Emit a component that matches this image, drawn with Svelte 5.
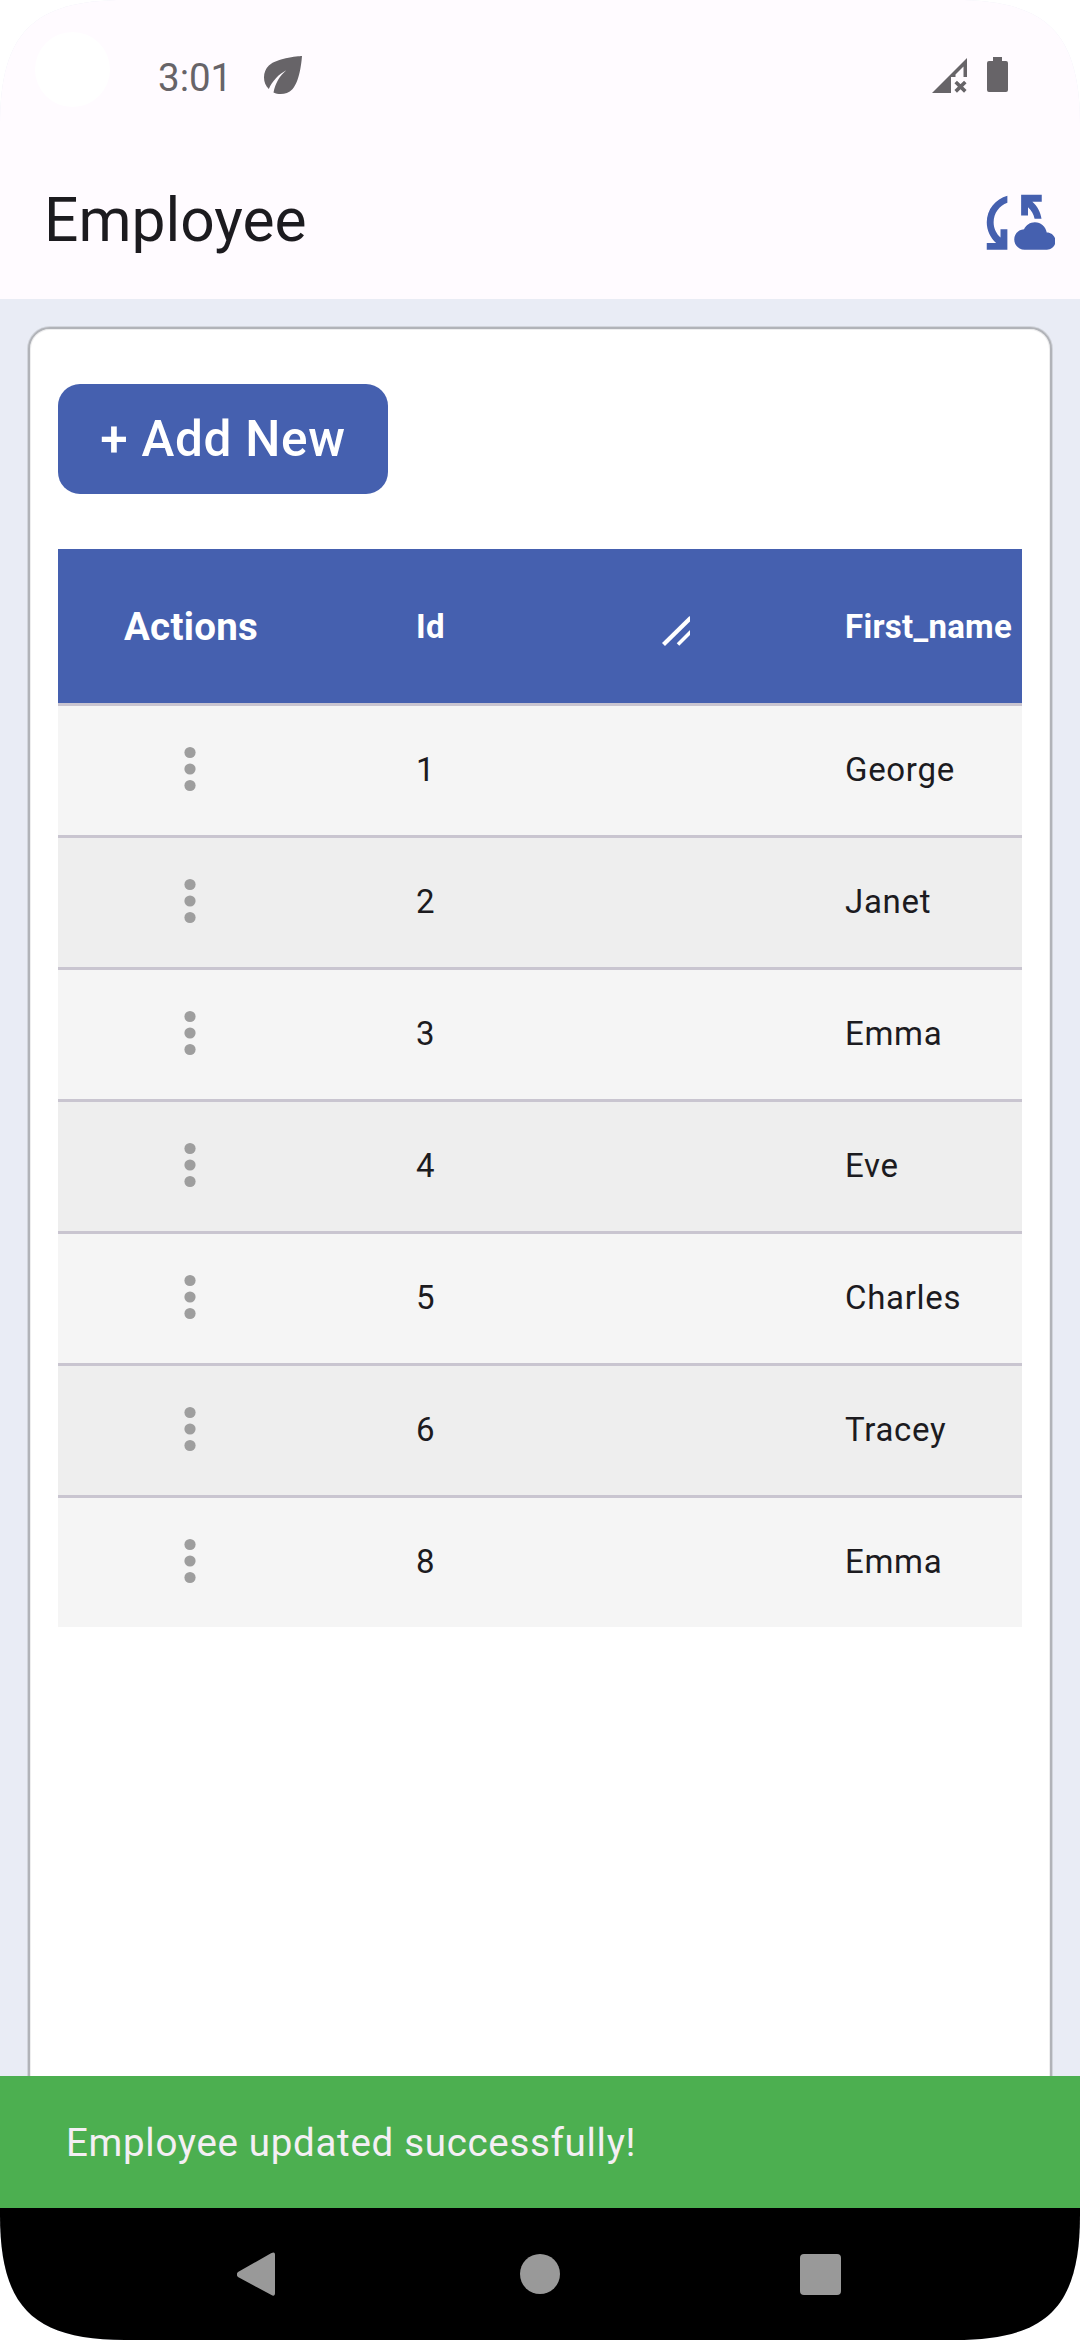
<script>
  const employees = [
    { id: 1, name: 'George' },
    { id: 2, name: 'Janet' },
    { id: 3, name: 'Emma' },
    { id: 4, name: 'Eve' },
    { id: 5, name: 'Charles' },
    { id: 6, name: 'Tracey' },
    { id: 8, name: 'Emma' }
  ];
</script>

<div class="screen">
  <header class="top">
    <div class="status">
      <span class="camera"></span>
      <span class="time">3:01</span>
      <svg class="leaf" viewBox="4 4 16 16"><path d="M6.05 8.05c-2.73 2.73-2.73 7.15-.02 9.88 1.47-3.4 4.09-6.24 7.36-7.93-2.77 2.34-4.71 5.61-5.39 9.32 2.6 1.23 5.8.78 7.95-1.37C19.43 14.47 20 4 20 4S9.53 4.57 6.05 8.05z" /></svg>
      <svg class="signal" viewBox="0 0 35 35">
        <path d="M0 35L35 0V19H31.5V8.5L23.5 16.5V19H19V35Z" />
        <path class="cross" d="M23.7 24L33.3 33.4M33.3 24L23.7 33.4" />
      </svg>
      <svg class="battery" viewBox="0 0 21 35"><path d="M6 0h9v4h4a2 2 0 0 1 2 2v27a2 2 0 0 1-2 2H2a2 2 0 0 1-2-2V6a2 2 0 0 1 2-2h4z" /></svg>
    </div>
    <div class="appbar">
      <h1>Employee</h1>
      <svg class="sync" viewBox="0 0 24 24"><path d="M21.5 14.98c-.02 0-.03 0-.05.01C21.2 13.3 19.76 12 18 12c-1.4 0-2.6.83-3.16 2.02C13.26 14.1 12 15.4 12 17c0 1.66 1.34 3 3 3l6.5-.02c1.38 0 2.5-1.12 2.5-2.5s-1.12-2.5-2.5-2.5zM10 4.26v2.09C7.67 7.18 6 9.39 6 12c0 1.77.78 3.34 2 4.44V14h2v6H4v-2h2.73C5.06 16.54 4 14.4 4 12c0-3.73 2.55-6.85 6-7.74zM14 10V4h6v2h-2.73c1.43 1.26 2.41 3.01 2.66 5h-2.02c-.23-1.36-.93-2.55-1.91-3.39V10z" /></svg>
    </div>
  </header>

  <main>
    <section class="card">
      <button>+ Add New</button>
      <div class="table">
        <div class="row head">
          <span class="actions">Actions</span>
          <span class="id">Id
            <svg class="resize" viewBox="0 0 30 32"><path d="M3.500 29.500L31 2.500" /><path class="short" d="M18 29.500L31 16.500" /></svg>
          </span>
          <span class="name">First_name</span>
        </div>
        {#each employees as e}
          <div class="row">
            <span class="actions">
              <svg class="dots" viewBox="0 0 12 46"><circle cx="6" cy="6.5" r="5.6" /><circle cx="6" cy="23" r="5.6" /><circle cx="6" cy="39.5" r="5.6" /></svg>
            </span>
            <span class="id">{e.id}</span>
            <span class="name">{e.name}</span>
          </div>
        {/each}
      </div>
    </section>
  </main>

  <div class="snack">Employee updated successfully!</div>
  <nav>
    <svg viewBox="0 0 44 46"><path d="M34 2.300Q38 0 38 3.500V42.500Q38 46 34 43.800L1 26Q-1.500 23.500 1 21Z" /></svg>
    <svg viewBox="0 0 44 46"><circle cx="22" cy="23" r="20" /></svg>
    <svg viewBox="0 0 44 46"><rect x="1" y="3" width="41" height="41" rx="4" /></svg>
  </nav>
</div>

<style>
  :global(body) { background: #fff; }
  .screen {
    width: 1080px; height: 2340px; display: flex; flex-direction: column;
    overflow: hidden; background: #e9ecf5;
    clip-path: path('M0 125C0 33 33 0 125 0H955C1047 0 1080 33 1080 125V2215C1080 2307 1047 2340 955 2340H125C33 2340 0 2307 0 2215Z');
    font-family: Roboto, sans-serif; color: #1c1b1f;
  }
  .top { height: 299px; background: #fffbff; }
  .status { height: 145px; display: flex; box-sizing: border-box; padding: 32px 72px 0 35px; fill: #676468; }
  .camera { width: 75px; height: 75px; border-radius: 50%; background: #fff; }
  .time { margin: 23px 0 0 48px; width: 105.5px; font-size: 38.5px; line-height: 46px; color: #676468; }
  .leaf { width: 38px; height: 38px; margin-top: 24px; }
  .signal { width: 35px; height: 35px; margin: 26px 20px 0 auto; }
  .cross { fill: none; stroke: #676468; stroke-width: 3.6; }
  .battery { width: 21px; height: 35px; margin-top: 25px; }
  .appbar { height: 154px; display: flex; align-items: center; justify-content: space-between; padding: 0 25px 0 44px; }
  h1 { margin: 0; padding-bottom: 2px; font-size: 60.5px; font-weight: 400; line-height: 76px; }
  .sync { width: 82.5px; height: 82.5px; fill: #4560af; }
  main { flex: 1; min-height: 0; padding: 28px 28px 0; overflow: hidden; }
  .card {
    box-sizing: border-box; height: 1900px; padding: 55px 28px 0;
    background: #fff; border: 2px solid #b1b3b8; border-radius: 22px;
    box-shadow: 0 0 0 1px #d2d5dc, inset 0 0 0 1px #eeeeef;
  }
  button {
    display: block; box-sizing: border-box; width: 330px; height: 110px; padding: 0; border: 0; border-radius: 22px;
    background: #4560af; color: #fff; font: 500 49.5px/110px Roboto, sans-serif; letter-spacing: .69px;
  }
  .table { width: 964px; margin-top: 55px; overflow: hidden; }
  .row { display: flex; align-items: center; height: 129px; border-top: 3px solid #c9c5d0; background: #f5f5f5; font-size: 33px; letter-spacing: .69px; }
  .row:nth-child(odd) { background: #eee; }
  .row.head { height: 154px; border: 0; background: #4560af; color: #fff; font-weight: 700; letter-spacing: .28px; }
  .actions { width: 264px; display: flex; justify-content: center; flex: none; }
  .head .actions { width: 266px; margin-right: -2px; font-size: 38.5px; }
  .id { width: 429px; padding-left: 94px; box-sizing: border-box; display: flex; flex: none; align-items: center; }
  .id, .name { line-height: 40px; padding-bottom: 2px; }
  .head .id, .head .name { padding-top: 2px; padding-bottom: 0; }
  .name { padding-left: 94px; white-space: nowrap; }
  .resize { width: 30px; height: 32px; margin: 8px 61px 0 auto; fill: none; stroke: #fff; stroke-width: 4.2; }
  .short { stroke-width: 3.6; }
  .dots { width: 12px; height: 46px; margin-bottom: 3px; fill: #9e9e9e; }
  .snack { height: 132px; box-sizing: border-box; padding: 1px 0 0 66px; background: #4caf50; color: #f4eff4; font-size: 38.5px; line-height: 132px; letter-spacing: .69px; }
  nav { height: 132px; display: flex; align-items: center; justify-content: center; gap: 237px; background: #000; fill: #999; }
  nav svg { width: 44px; height: 46px; }
</style>
